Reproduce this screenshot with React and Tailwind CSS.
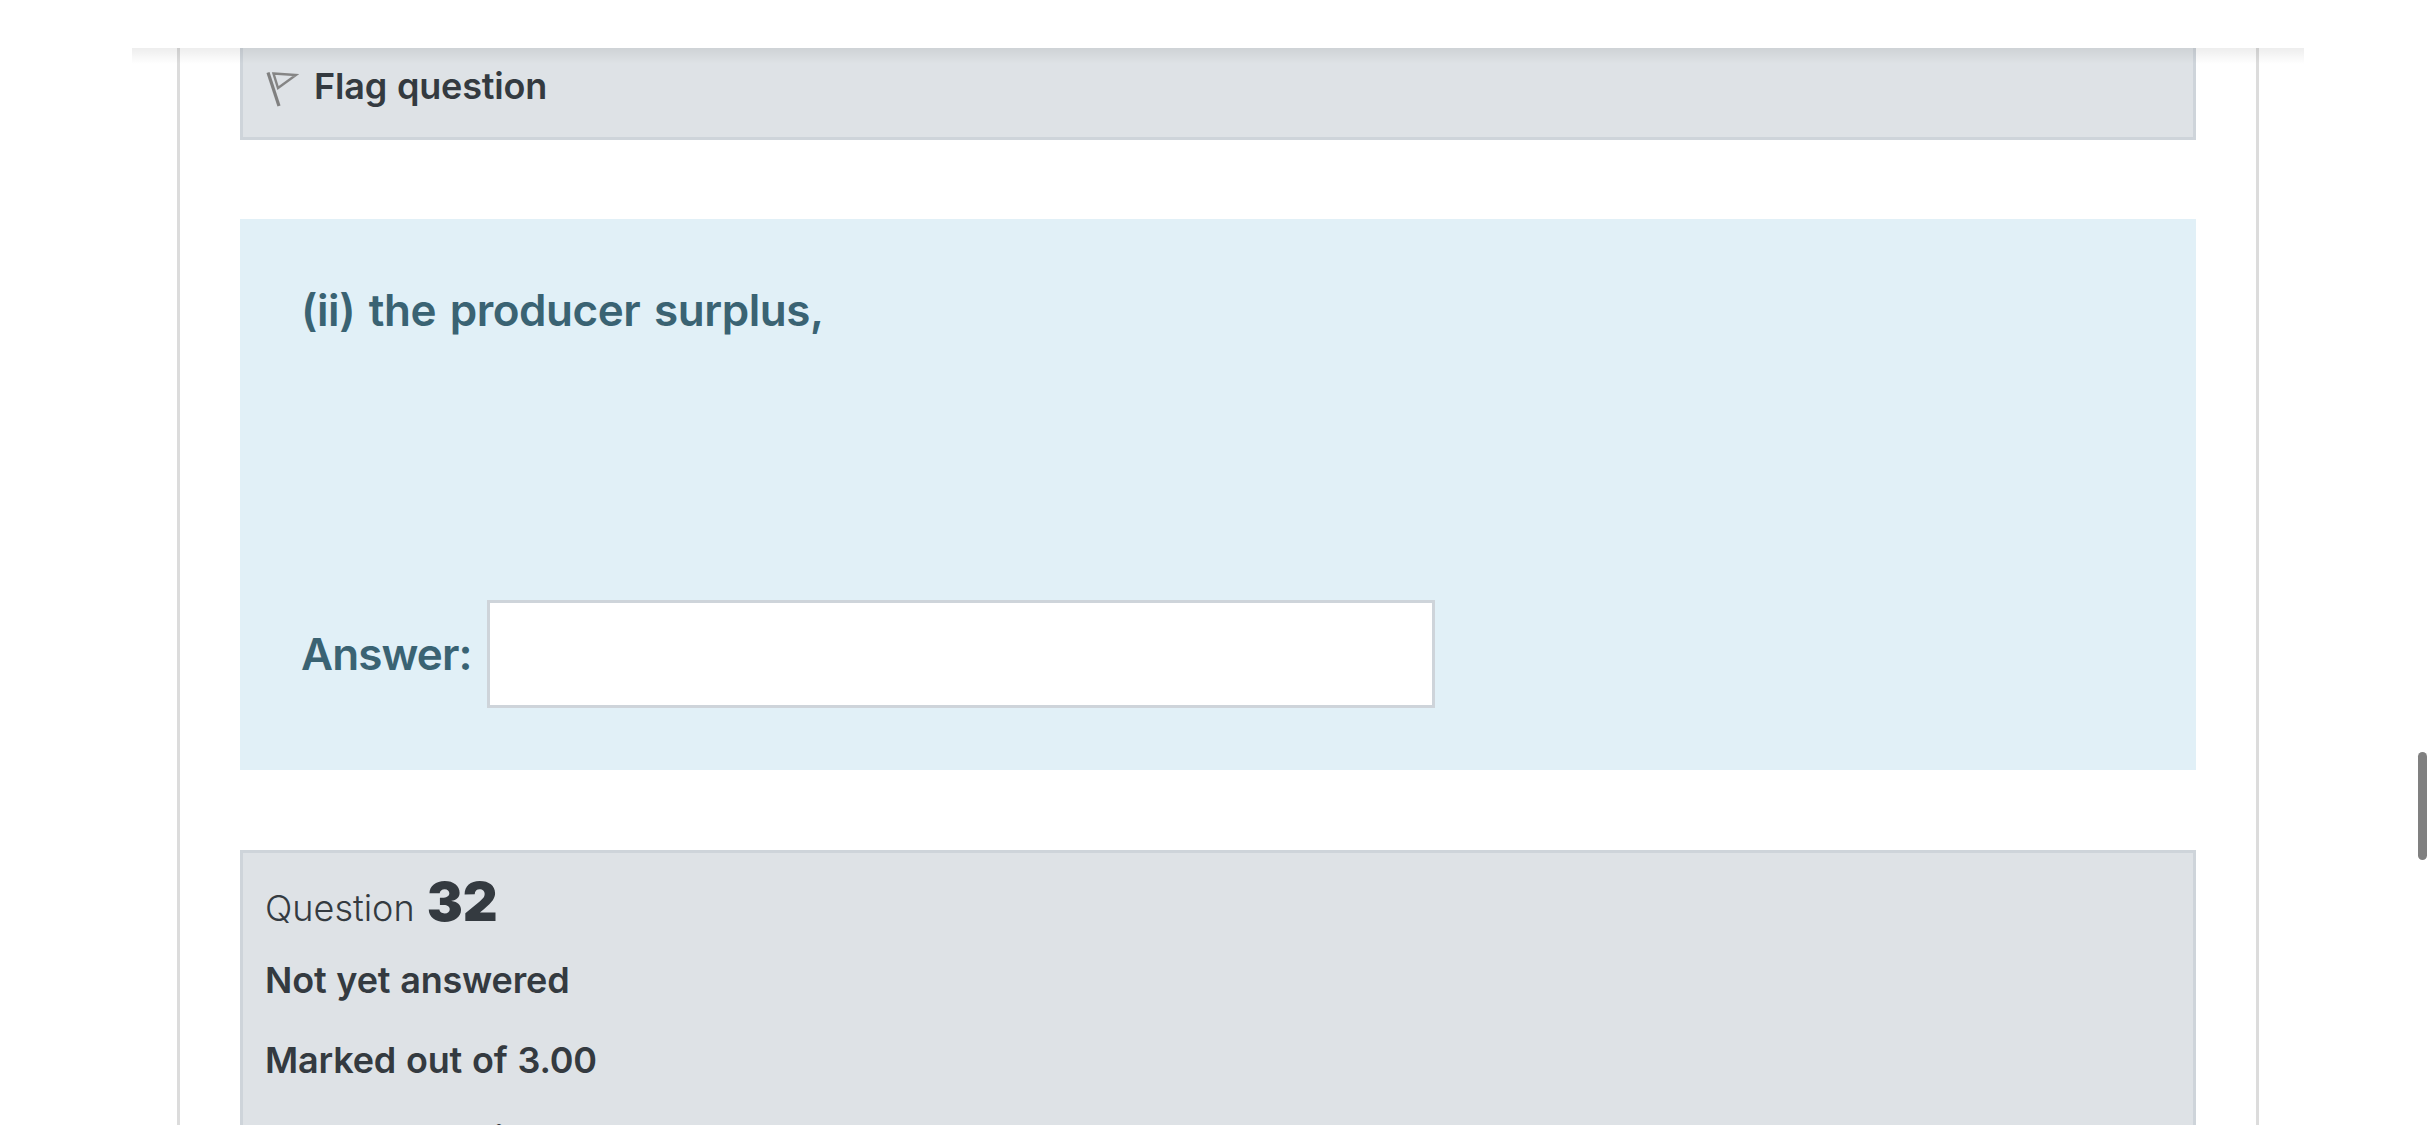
import React from 'react';

function FlagRow() {
  return (
    <div className="flex items-start gap-[15px]">
      <svg width="33" height="37" viewBox="0 0 33 37" fill="none" className="mt-[5px] shrink-0">
        <path d="M2 1.5L13 35" stroke="#808080" strokeWidth="3.2" />
        <path d="M7.5 2.5L30 4L12 17Z" stroke="#858585" strokeWidth="2.4" />
      </svg>
      <span className="text-[36px] leading-[40px] font-[570] tracking-[-0.005em] [word-spacing:1px]">Flag question</span>
    </div>
  );
}

export default function App() {
  return (
    <div className="relative h-[1125px] w-[2436px] overflow-hidden bg-white font-['Inter',sans-serif] text-[#343a40]">
      {/* top bar */}
      <div className="relative z-10 mx-[132px] h-[48px] bg-white">
        <div className="absolute top-full inset-x-0 h-[16px] bg-linear-to-b from-[rgba(0,0,0,0.07)] to-transparent" />
      </div>

      <div className="mx-[177px] h-[1077px] border-x-3 border-[#dcdcdc] px-[60px]">
        {/* previous question info, scrolled under the bar */}
        <div className="h-[92px] border-x-3 border-b-3 border-[#ced4da] bg-[#dee2e6] pl-[23px] pt-[18px]">
          <FlagRow />
        </div>

        {/* question text */}
        <div className="mt-[79px] flex h-[551px] flex-col justify-between bg-[#e1f0f7] px-[61px] pt-[61px] pb-[62px] text-[#3a6373]">
          <p className="text-[44px] leading-[60px] font-[570] tracking-[-0.01em] [word-spacing:3px]">(ii) the producer surplus,</p>
          <div className="flex items-center gap-[15px]">
            <label className="-mt-px text-[44px] leading-[60px] font-[570] tracking-[-0.02em]">Answer:</label>
            <input className="h-[108px] w-[948px] border-3 border-[#ced4da] bg-white" />
          </div>
        </div>

        {/* next question info */}
        <div className="mt-[80px] h-[400px] border-3 border-[#ced4da] bg-[#dee2e6] px-[22px] pt-[19px]">
          <h3 className="flex items-baseline gap-[12px] text-[36px] leading-[60px] font-light">
            Question <span className="text-[54px] font-black">32</span>
          </h3>
          <div className="mt-[16px] text-[36px] leading-[52px] font-[570] tracking-[-0.005em] [word-spacing:1px]">Not yet answered</div>
          <div className="mt-[28px] text-[36px] leading-[52px] font-[570] tracking-[-0.005em] [word-spacing:1px]">Marked out of 3.00</div>
          <div className="mt-[33px] pl-px">
            <FlagRow />
          </div>
        </div>
      </div>

      {/* scrollbar thumb */}
      <div className="absolute top-[752px] left-[2418px] h-[108px] w-[9px] rounded-full bg-[#808080]" />
    </div>
  );
}
